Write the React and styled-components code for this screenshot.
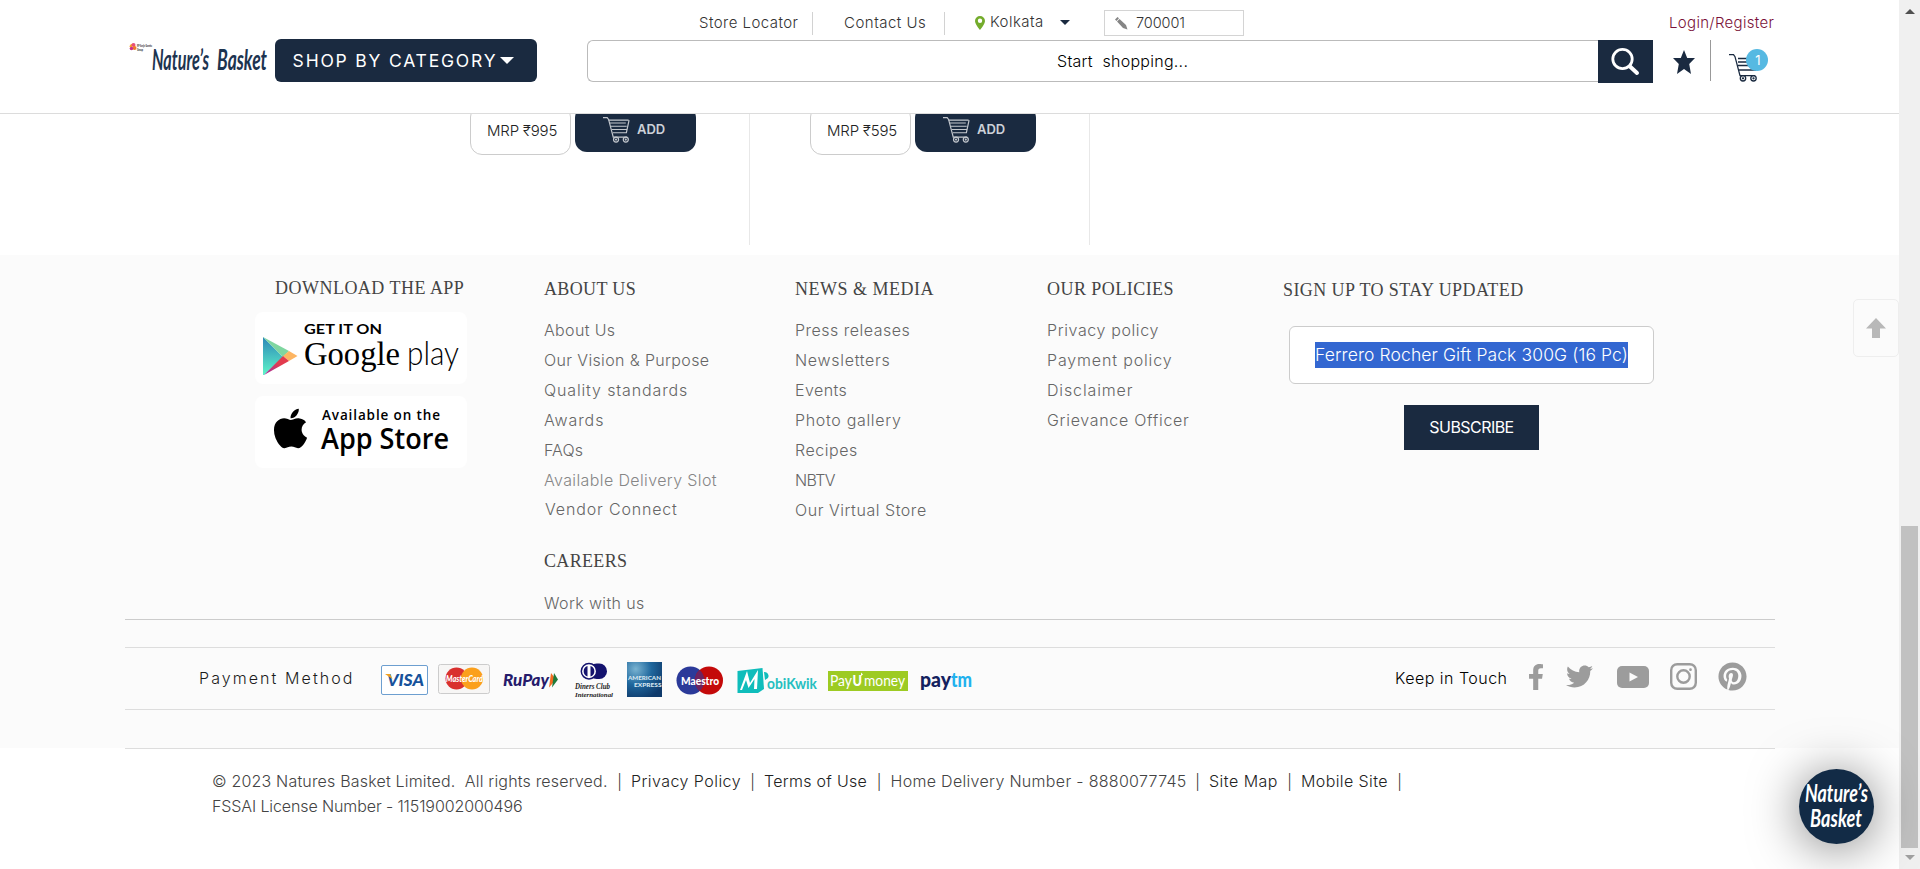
import React from "react";
import styled, { createGlobalStyle, css } from "styled-components";
import { FaApple, FaFacebookF, FaPinterest, FaTwitter } from "react-icons/fa";

const NAVY = "#1a2a40";

const GlobalStyle = createGlobalStyle`
  * { box-sizing: border-box; }
  body {
    margin: 0;
    background: #fff;
    font-family: Inter, "Open Sans", sans-serif;
    font-weight: 300;
    overflow: hidden;
  }
`;

const Window = styled.div`
  display: flex;
  width: 1920px;
  height: 869px;
  overflow: hidden;
`;

const Page = styled.div`
  width: 1899px;
  height: 869px;
  background: #fff;
  position: relative;
`;

/* Text run with its own width, size and tracking */
const Label = styled.span`
  display: inline-block;
  flex: none;
  white-space: pre;
  width: ${(p) => (p.$w ? `${p.$w}px` : "auto")};
  padding-bottom: ${(p) => p.$lift || 0}px;
  font-size: ${(p) => p.$size || 16}px;
  letter-spacing: ${(p) => p.$ls || 0}px;
  color: ${(p) => p.$color || "inherit"};
  font-weight: ${(p) => p.$weight || 300};
`;

/* ---------- header ---------- */

const Header = styled.header`
  height: 114px;
  border-bottom: 1px solid #dcdcdc;
  background: #fff;
`;

const TopBar = styled.div`
  display: flex;
  align-items: center;
  height: 39px;
  padding: 7px 0 0 699px;
  color: #333;
`;

const TopDivider = styled.i`
  width: 1px;
  height: 23px;
  background: #d2d2d2;
  margin: 0 ${(p) => p.$right}px 0 ${(p) => p.$left}px;
`;

const City = styled.div`
  display: flex;
  align-items: center;
  gap: 5px;
  width: 129px;
  padding-bottom: 1px;
`;

const Caret = styled.i`
  border: ${(p) => p.$size}px solid transparent;
  border-top-color: ${(p) => p.$color};
  border-bottom: 0;
  margin-left: ${(p) => p.$left || 0}px;
`;

const PinCode = styled.div`
  display: flex;
  align-items: center;
  gap: 8px;
  width: 140px;
  height: 26px;
  padding-left: 10px;
  border: 1px solid #d4d4d4;
  margin-right: 425px;
`;

const MainBar = styled.div`
  display: flex;
  align-items: flex-start;
  padding-left: 125px;
  height: 50px;
`;

const CategoryButton = styled.button`
  display: flex;
  align-items: center;
  width: 262px;
  height: 43px;
  border: 0;
  border-radius: 6px;
  padding: 0 0 0 15px;
  background: ${NAVY};
  color: #fff;
  font-family: inherit;
`;

const SearchField = styled.div`
  width: 1011px;
  height: 42px;
  margin: 1px 0 0 50px;
  padding-left: 469px;
  line-height: 41px;
  border: 1px solid #bbb;
  border-right: 0;
  border-radius: 6px 0 0 6px;
  color: #000;
`;

const SearchButton = styled.button`
  width: 55px;
  height: 43px;
  margin-top: 1px;
  padding: 0;
  border: 0;
  background: ${NAVY};
`;

const StarWrap = styled.div`
  height: 41px;
  width: 58px;
  margin-top: 1px;
  padding: 10px 0 0 20px;
  border-right: 1px solid #999;
`;

const CartWrap = styled.div`
  position: relative;
  padding: 14px 0 0 18px;
`;

const CartBadge = styled.span`
  position: absolute;
  left: 35px;
  top: 10px;
  width: 22px;
  height: 22px;
  border-radius: 50%;
  background: #56b9e2;
  color: #fff;
  font-size: 13px;
  font-weight: 400;
  line-height: 22px;
  text-align: center;
  padding-left: 2px;
`;

/* ---------- products ---------- */

const Products = styled.section`
  display: flex;
  height: 141px;
  padding-left: 410px;
  overflow: hidden;
`;

const Product = styled.article`
  display: flex;
  align-items: flex-end;
  gap: 4px;
  width: 340px;
  height: 131px;
  padding: 0 0 90px 60px;
  border-right: 1px solid #e8e8e8;
`;

const Price = styled.div`
  flex: none;
  width: 101px;
  height: 50px;
  padding: 8px 0 0 16px;
  line-height: 32px;
  border: 1px solid #ccc;
  border-radius: 12px;
  color: #222;
`;

const AddButton = styled.button`
  flex: none;
  display: flex;
  align-items: center;
  gap: 7px;
  width: 121px;
  height: 46px;
  margin-bottom: 3px;
  padding: 0 0 0 28px;
  border: 0;
  border-radius: 12px;
  background: ${NAVY};
  color: #cdd1d8;
  font-family: inherit;
`;

/* ---------- footer ---------- */

const Footer = styled.footer`
  height: 493px;
  background: #fbfbfb;
  padding: 0 124px 0 125px;
`;

const Columns = styled.div`
  display: flex;
  height: 365px;
  border-bottom: 1px solid #ccc;
`;

const Column = styled.div`
  flex: none;
  width: ${(p) => p.$w}px;
  padding: ${(p) => p.$top || 23}px 0 0 ${(p) => p.$left || 0}px;
`;

const Heading = styled.h3`
  margin: ${(p) => p.$above || 0}px 0 ${(p) => p.$gap ?? 15}px ${(p) => p.$left || 0}px;
  font: 400 18px/22px "Liberation Serif", serif;
  letter-spacing: ${(p) => p.$ls}px;
  color: #444;
  white-space: nowrap;
`;

const Links = styled.ul`
  list-style: none;
  margin: 0;
  padding: 0;
  color: #666;
`;

const LinkItem = styled.li`
  height: 30px;
  line-height: 30px;
  ${(p) =>
    p.$nudged &&
    css`
      margin: -1px 0 0 1px;
    `}
`;

const StoreBadge = styled.div`
  width: 212px;
  height: 72px;
  margin-bottom: 12px;
  border-radius: 8px;
  background: #fff;
`;

const EmailField = styled.div`
  width: 365px;
  height: 58px;
  margin-left: 6px;
  padding: 15px 0 0 25px;
  border: 1px solid #ccc;
  border-radius: 6px;
  background: #fff;
`;

const Selected = styled.div`
  width: 313px;
  height: 26px;
  line-height: 25px;
  background: #3367d1;
  color: #fff;
`;

const Subscribe = styled.button`
  display: block;
  width: 135px;
  height: 45px;
  margin: 21px 0 0 121px;
  padding: 0 0 2px;
  border: 0;
  background: ${NAVY};
  color: #fff;
  font-family: inherit;
`;

const PaymentBar = styled.div`
  display: flex;
  align-items: center;
  height: 63px;
  margin-top: 27px;
  padding: 0 0 0 74px;
  border: solid #ddd;
  border-width: 1px 0;
  color: #1c1c1c;
`;

const Cards = styled.div`
  display: flex;
  align-items: center;
  width: 1015px;
  margin-left: 24px;
`;

const Socials = styled.div`
  display: flex;
  align-items: center;
  padding-bottom: 4px;
  color: #9c9c9c;
`;

const SocialIcon = styled.span`
  display: flex;
  margin-left: ${(p) => p.$left}px;
`;

const Legal = styled.section`
  margin: 0 124px 0 125px;
  padding: 20px 0 0 87px;
  border-top: 1px solid #ddd;
  color: #444;
  line-height: 25px;
`;

const LegalRow = styled.div`
  display: flex;
  height: 25px;
`;

const Bar = styled.span`
  width: 23px;
  font-size: 15px;
  text-align: center;
  color: #333;
`;

/* ---------- overlays ---------- */

const ToTop = styled.button`
  position: absolute;
  left: 1853px;
  top: 299px;
  width: 46px;
  height: 58px;
  padding: 2px 0 0;
  border: 1px solid #eee;
  border-radius: 5px;
  background: #fbfbfb;
`;

const ChatBubble = styled.div`
  position: absolute;
  left: 1799px;
  top: 769px;
  width: 75px;
  height: 75px;
  border-radius: 50%;
  background: #122b46;
  box-shadow: 0 4px 50px rgba(0, 0, 0, 0.5);
`;

const ScrollTrack = styled.aside`
  display: flex;
  flex-direction: column;
  align-items: center;
  width: 21px;
  background: #f0f0f0;
`;

const ScrollArrow = styled.i`
  border: 5px solid transparent;
  margin-top: ${(p) => p.$top}px;
  ${(p) =>
    p.$down
      ? css`
          border-top-color: #a0a0a0;
          border-bottom: 0;
        `
      : css`
          border-bottom-color: #505050;
          border-top: 0;
        `}
`;

const ScrollThumb = styled.div`
  width: 17px;
  height: 322px;
  margin-top: 512px;
  background: #c1c1c1;
`;

/* ---------- drawings ---------- */

const Fit = ({ x, y, w, size, fill = "#000", weight = 400, family = "Lato", ...rest }) => (
  <text
    x={x}
    y={y}
    textLength={w}
    lengthAdjust="spacingAndGlyphs"
    fontSize={size}
    fill={fill}
    fontWeight={weight}
    fontFamily={`"${family}", sans-serif`}
    {...rest}
  />
);

const Logo = () => (
  <svg width="150" height="43" viewBox="0 0 150 43">
    <path d="M4.500 8a3 3 0 0 1 4-3l-1.500 3z" fill="#f6a623" />
    <circle cx="8.500" cy="6" r="2" fill="#e94e77" />
    <circle cx="9.500" cy="9" r="2" fill="#f07c2a" />
    <circle cx="6.500" cy="9.500" r="1.800" fill="#c9308a" />
    <Fit x="12" y="7.500" w="15" size="3.300" weight={900} fill="#333">RP-Sanjiv Goenka</Fit>
    <Fit x="12" y="11.800" w="6" size="3.300" weight={900} fill="#333">Group</Fit>
    <Fit x="27" y="31" w="57" size="28" weight={700} fill="#1d3450" fontStyle="italic">Nature’s</Fit>
    <Fit x="92" y="31" w="50" size="28" weight={700} fill="#1d3450" fontStyle="italic">Basket</Fit>
  </svg>
);

const CartIcon = ({ color, closed, width = 29 }) => (
  <svg width={width} height={width} viewBox="0 0 29 29" fill="none" stroke={color} strokeWidth="1.300">
    <path d="M0 1.700h4.500l1.500 2 5 19h15" />
    <path d={closed ? "M6 4.500h21.500M7.500 7.500h17M8.500 11h17M9.500 14.500h16M10.500 18h15M28 4.500l-3 14" : "M9 5.500h11M9 9h13M9 12.500h18M10 17h17"} />
    <circle cx="14" cy="25.300" r="2.700" />
    <circle cx="24.500" cy="25.300" r="2.700" />
    <circle cx="14" cy="25.300" r=".5" />
    <circle cx="24.500" cy="25.300" r=".5" />
  </svg>
);

const GooglePlay = () => (
  <svg width="212" height="72" viewBox="0 0 212 72">
    <defs>
      <linearGradient id="gp" x1="0" y1="0" x2="0" y2="1">
        <stop offset="0" stopColor="#2c87b8" />
        <stop offset="1" stopColor="#5ff5c8" />
      </linearGradient>
      <linearGradient id="gr" x1="0" y1="1" x2="1" y2="0">
        <stop offset="0" stopColor="#9b2fa8" />
        <stop offset=".6" stopColor="#e23b4e" />
      </linearGradient>
    </defs>
    <path d="M8 25l20 20L9 63H8z" fill="url(#gp)" />
    <path d="M8 25l26 14-6 6z" fill="#7fd6a0" />
    <path d="M34 39l8.500 5L34 49l-6-5z" fill="#fdb562" />
    <path d="M9 63l19-19 6 5z" fill="url(#gr)" />
    <Fit x="49" y="21.500" w="78" size="14" weight={700}>GET IT ON</Fit>
    <Fit x="49" y="53" w="96" size="34" family="Liberation Serif">Google</Fit>
    <Fit x="152" y="53" w="52" size="33" weight={300}>play</Fit>
  </svg>
);

const AppStore = () => (
  <svg width="212" height="72" viewBox="0 0 212 72">
    <g transform="translate(13 10)">
      <FaApple size={45} color="#000" />
    </g>
    <Fit x="67" y="24" w="118" size="13.500" weight={600} family="Open Sans" lengthAdjust="spacing">Available on the</Fit>
    <Fit x="66" y="53" w="128" size="29" weight={600} family="Open Sans">App Store</Fit>
  </svg>
);

const Visa = () => (
  <svg width="48" height="50" viewBox="380 0 48 50">
    <rect x="381.500" y="11.500" width="46" height="29" rx="1.500" fill="#fff" stroke="#6d9fd0" />
    <Fit x="387" y="32" w="37" size="17" weight={900} fill="#17529b" fontStyle="italic">VISA</Fit>
    <path d="M385 20h5l2.500 5z" fill="#f0a020" />
  </svg>
);

const MasterCard = () => (
  <svg width="62" height="50" viewBox="428 0 62 50">
    <rect x="438.500" y="10.500" width="51" height="29" rx="2" fill="#f7f6f5" stroke="#ccc" />
    <circle cx="456.500" cy="24.500" r="11" fill="#d9302e" />
    <circle cx="472" cy="24.500" r="11" fill="#fba01c" />
    <Fit x="446" y="28" w="37" size="9" weight={900} fill="#fff" fontStyle="italic">MasterCard</Fit>
  </svg>
);

const RuPay = () => (
  <svg width="72" height="50" viewBox="490 0 72 50">
    <Fit x="503" y="32" w="46" size="16.500" weight={900} fill="#261b6b" fontStyle="italic">RuPay</Fit>
    <path d="M551 19l5 6.500-7 8z" fill="#f26a21" />
    <path d="M554 19l4 6.500-6 8z" fill="#1f7a3a" />
  </svg>
);

const Diners = () => (
  <svg width="58" height="50" viewBox="562 0 58 50">
    <rect x="589" y="9.500" width="18" height="15.500" rx="7.700" fill="#14136e" />
    <circle cx="589" cy="17.200" r="7.700" fill="#fff" stroke="#14136e" strokeWidth="1.500" />
    <path d="M587.500 12a5.500 5.500 0 0 0 0 10.500zM590.500 12a5.500 5.500 0 0 1 0 10.500z" fill="#14136e" />
    <Fit x="575" y="35" w="35" size="8" family="Liberation Serif" fontStyle="italic" fill="#222" weight={700}>Diners Club</Fit>
    <Fit x="575" y="42.500" w="38" size="7" family="Liberation Serif" fontStyle="italic" fill="#222" weight={700}>International</Fit>
  </svg>
);

const Amex = () => (
  <svg width="52" height="50" viewBox="620 0 52 50">
    <defs>
      <radialGradient id="ax" cx=".25" cy=".2" r=".9">
        <stop offset="0" stopColor="#79b3d1" />
        <stop offset=".5" stopColor="#1f679d" />
        <stop offset="1" stopColor="#0f3a6b" />
      </radialGradient>
    </defs>
    <rect x="627" y="8" width="35" height="35" fill="url(#ax)" />
    <Fit x="628" y="25.500" w="33" size="6" weight={900} fill="#d5e5ef">AMERICAN</Fit>
    <Fit x="634" y="33" w="27.500" size="6" weight={900} fill="#d5e5ef">EXPRESS</Fit>
  </svg>
);

const Maestro = () => (
  <svg width="56" height="50" viewBox="672 0 56 50">
    <circle cx="690.500" cy="26.500" r="14" fill="#2b3a99" />
    <circle cx="709" cy="26.500" r="14" fill="#c40a0a" />
    <path d="M699.700 16a14 14 0 0 0 0 21 14 14 0 0 0 0-21z" fill="#6c2360" />
    <Fit x="681" y="30.500" w="38" size="11.500" weight={900} fill="#fff">Maestro</Fit>
  </svg>
);

const Mobikwik = () => (
  <svg width="94" height="50" viewBox="728 0 94 50">
    <path d="M737.500 17l25-3 1.500 21-6 4h-20.500z" fill="#0fbdbb" />
    <path d="M740 36l7-19 3 12 8-13-1 19h-3l.500-10-6 9-2.500-8-4 10z" fill="#fff" />
    <path d="M764 18a4 4 0 0 1 4 6l-3 2z" fill="#0fbdbb" />
    <Fit x="767" y="35" w="50" size="16" weight={700} fill="#25bfc0">obiKwik</Fit>
  </svg>
);

const PayU = () => (
  <svg width="90" height="50" viewBox="822 0 90 50">
    <rect x="828" y="17" width="80" height="20" fill="#9dcb23" />
    <Fit x="830" y="32" w="22" size="14.500" fill="#fff">Pay</Fit>
    <Fit x="852.500" y="32" w="9.500" size="15" weight={900} fill="#fff">U</Fit>
    <path d="M861 18.500l2 2-2 1.500z" fill="#fff" />
    <Fit x="864" y="32" w="41" size="14.500" fill="#fff">money</Fit>
  </svg>
);

const Paytm = () => (
  <svg width="70" height="50" viewBox="912 0 70 50">
    <Fit x="920" y="33" w="31" size="20" weight={900} fill="#14225f">pay</Fit>
    <Fit x="951" y="33" w="21" size="20" weight={900} fill="#22b2ee">tm</Fit>
  </svg>
);

const YouTube = () => (
  <svg width="32" height="22" viewBox="0 0 32 22">
    <rect width="32" height="22" rx="5" fill="currentColor" />
    <path d="M12.500 6.500l8.500 4.500-8.500 4.500z" fill="#fbfbfb" />
  </svg>
);

const Instagram = () => (
  <svg width="27" height="27" viewBox="0 0 27 27" fill="none" stroke="currentColor" strokeWidth="2.400">
    <rect x="1.200" y="1.200" width="24.600" height="24.600" rx="6" />
    <circle cx="13.500" cy="13.500" r="6.200" />
    <circle cx="20.500" cy="6.700" r=".6" strokeWidth="1.500" />
  </svg>
);

/* ---------- content: [text, tracking, colour] ---------- */

const about = [
  ["About Us", 0.35],
  ["Our Vision & Purpose", 0.36],
  ["Quality standards", 0.86],
  ["Awards", 0.9],
  ["FAQs", 0.1],
  ["Available Delivery Slot", 0.38, "#868686"],
  ["Vendor Connect", 0.84],
];
const news = [
  ["Press releases", 0.5],
  ["Newsletters", 0.7],
  ["Events", 0.42],
  ["Photo gallery", 0.68],
  ["Recipes", 0.54],
  ["NBTV", -0.7],
  ["Our Virtual Store", 0.54],
];
const policies = [
  ["Privacy policy", 0.61],
  ["Payment policy", 0.85],
  ["Disclaimer", 0.86],
  ["Grievance Officer", 0.7],
];
const legal = [
  ["© 2023 Natures Basket Limited.  All rights reserved.", 396, 0.18],
  ["Privacy Policy", 110, 0.45, "#222"],
  ["Terms of Use", 103.5, 0.29, "#222"],
  ["Home Delivery Number - 8880077745", 295.5, 0.31],
  ["Site Map", 69, 0.48, "#222"],
  ["Mobile Site", 87, 0.4, "#222"],
];

const LinkList = ({ items }) => (
  <Links>
    {items.map(([text, ls, color]) => (
      <LinkItem key={text} $nudged={text === "Vendor Connect"}>
        <Label $ls={ls} $color={color}>{text}</Label>
      </LinkItem>
    ))}
  </Links>
);

const ProductCard = ({ price }) => (
  <Product>
    <Price>
      <Label $size={15} $ls={-0.16}>{`MRP ₹${price}`}</Label>
    </Price>
    <AddButton>
      <CartIcon color="#c3c7cd" closed width={27} />
      <Label $size={13} $lift={1} $weight={600}>ADD</Label>
    </AddButton>
  </Product>
);

export default function App() {
  return (
    <Window>
      <GlobalStyle />
      <Page>
        <Header>
          <TopBar>
            <Label $w={99} $size={15} $ls={0.45} $lift={2}>Store Locator</Label>
            <TopDivider $left={14} $right={31} />
            <Label $w={82} $size={15} $ls={0.5} $lift={2}>Contact Us</Label>
            <TopDivider $left={18} $right={30} />
            <City>
              <svg width="10" height="14" viewBox="0 0 10 14">
                <path fillRule="evenodd" d="M5 0a5 5 0 0 1 5 5c0 3-5 9-5 9S0 8 0 5a5 5 0 0 1 5-5zm0 2.600a2.200 2.200 0 1 0 0 4.400 2.200 2.200 0 0 0 0-4.400z" fill="#74ac2c" />
              </svg>
              <Label $w={54} $size={15} $ls={0.48} $lift={2}>Kolkata</Label>
              <Caret $size={5} $color={NAVY} $left={11} />
            </City>
            <PinCode>
              <svg width="13" height="13" viewBox="0 0 13 13">
                <path d="M0 2.500L2.500 0 4 1.300 1.500 4zM2 4.500L4.500 2l6.500 6 1.500 4.500-4.500-1.500z" fill="#858585" />
              </svg>
              <Label $size={14.5} $ls={-0.07} $lift={1}>700001</Label>
            </PinCode>
            <Label $size={15} $ls={0.33} $lift={2} $color="#7a1238">Login/Register</Label>
          </TopBar>
          <MainBar>
            <Logo />
            <CategoryButton>
              <Label $w={210} $size={17.5} $ls={1.8} $weight={400}>SHOP BY CATEGORY</Label>
              <Caret $size={7.5} $color="#fff" />
            </CategoryButton>
            <SearchField>
              <Label $ls={0.27}>Start  shopping...</Label>
            </SearchField>
            <SearchButton aria-label="Search">
              <svg width="55" height="43" viewBox="0 0 55 43" fill="none" stroke="#fff" strokeLinecap="round">
                <circle cx="24.500" cy="19" r="9.700" strokeWidth="2.800" />
                <path d="M32 26.500l7 6.500" strokeWidth="4" />
              </svg>
            </SearchButton>
            <StarWrap>
              <svg width="22" height="24" viewBox="0 0 22 24">
                <path d="M11 0l3.200 8H22l-5.800 6L18 24l-7-5-7 5 1.800-10L0 8h7.800z" fill={NAVY} />
              </svg>
            </StarWrap>
            <CartWrap>
              <CartIcon color={NAVY} />
              <CartBadge>1</CartBadge>
            </CartWrap>
          </MainBar>
        </Header>

        <Products>
          <ProductCard price={995} />
          <ProductCard price={595} />
        </Products>

        <Footer>
          <Columns>
            <Column $w={419} $left={130} $top={22}>
              <Heading $ls={0.48} $left={20} $gap={13}>DOWNLOAD THE APP</Heading>
              <StoreBadge><GooglePlay /></StoreBadge>
              <StoreBadge><AppStore /></StoreBadge>
            </Column>
            <Column $w={251}>
              <Heading $ls={0.36}>ABOUT US</Heading>
              <LinkList items={about} />
              <Heading $ls={0.33} $above={26} $gap={16}>CAREERS</Heading>
              <LinkList items={[["Work with us", 0.38]]} />
            </Column>
            <Column $w={252}>
              <Heading $ls={0.5}>NEWS &amp; MEDIA</Heading>
              <LinkList items={news} />
            </Column>
            <Column $w={236}>
              <Heading $ls={0.46}>OUR POLICIES</Heading>
              <LinkList items={policies} />
            </Column>
            <Column $w={372} $top={24}>
              <Heading $ls={0.42} $gap={25}>SIGN UP TO STAY UPDATED</Heading>
              <EmailField>
                <Selected>
                  <Label $size={17.5} $ls={0.11}>Ferrero Rocher Gift Pack 300G (16 Pc)</Label>
                </Selected>
              </EmailField>
              <Subscribe>
                <Label $size={16} $ls={-0.55} $weight={400}>SUBSCRIBE</Label>
              </Subscribe>
            </Column>
          </Columns>

          <PaymentBar>
            <Label $w={157} $ls={2.08} $lift={2}>Payment Method</Label>
            <Cards>
              <Visa />
              <MasterCard />
              <RuPay />
              <Diners />
              <Amex />
              <Maestro />
              <Mobikwik />
              <PayU />
              <Paytm />
            </Cards>
            <Label $w={113} $ls={0.48} $lift={2} $color="#000">Keep in Touch</Label>
            <Socials>
              <SocialIcon $left={14.5}><FaFacebookF size={26} /></SocialIcon>
              <SocialIcon $left={17}><FaTwitter size={27} /></SocialIcon>
              <SocialIcon $left={24}><YouTube /></SocialIcon>
              <SocialIcon $left={21}><Instagram /></SocialIcon>
              <SocialIcon $left={21}><FaPinterest size={29} /></SocialIcon>
            </Socials>
          </PaymentBar>
        </Footer>

        <Legal>
          <LegalRow>
            {legal.map(([text, w, ls, color]) => (
              <React.Fragment key={text}>
                <Label $w={w} $ls={ls} $color={color}>{text}</Label>
                <Bar>|</Bar>
              </React.Fragment>
            ))}
          </LegalRow>
          <LegalRow>
            <Label $ls={-0.11}>FSSAI License Number - 11519002000496</Label>
          </LegalRow>
        </Legal>

        <ToTop aria-label="Back to top">
          <svg width="20" height="20" viewBox="0 0 20 20">
            <path d="M10 0l10 10.500h-6V20H6v-9.500H0z" fill="#b8b8b8" />
          </svg>
        </ToTop>
        <ChatBubble>
          <svg width="75" height="75" viewBox="0 0 75 75">
            <Fit x="6" y="33" w="63" size="25" weight={700} fill="#fff" fontStyle="italic">Nature’s</Fit>
            <Fit x="11" y="58" w="52" size="25" weight={700} fill="#fff" fontStyle="italic">Basket</Fit>
          </svg>
        </ChatBubble>
      </Page>
      <ScrollTrack>
        <ScrollArrow $top={9} />
        <ScrollThumb />
        <ScrollArrow $top={7} $down />
      </ScrollTrack>
    </Window>
  );
}
